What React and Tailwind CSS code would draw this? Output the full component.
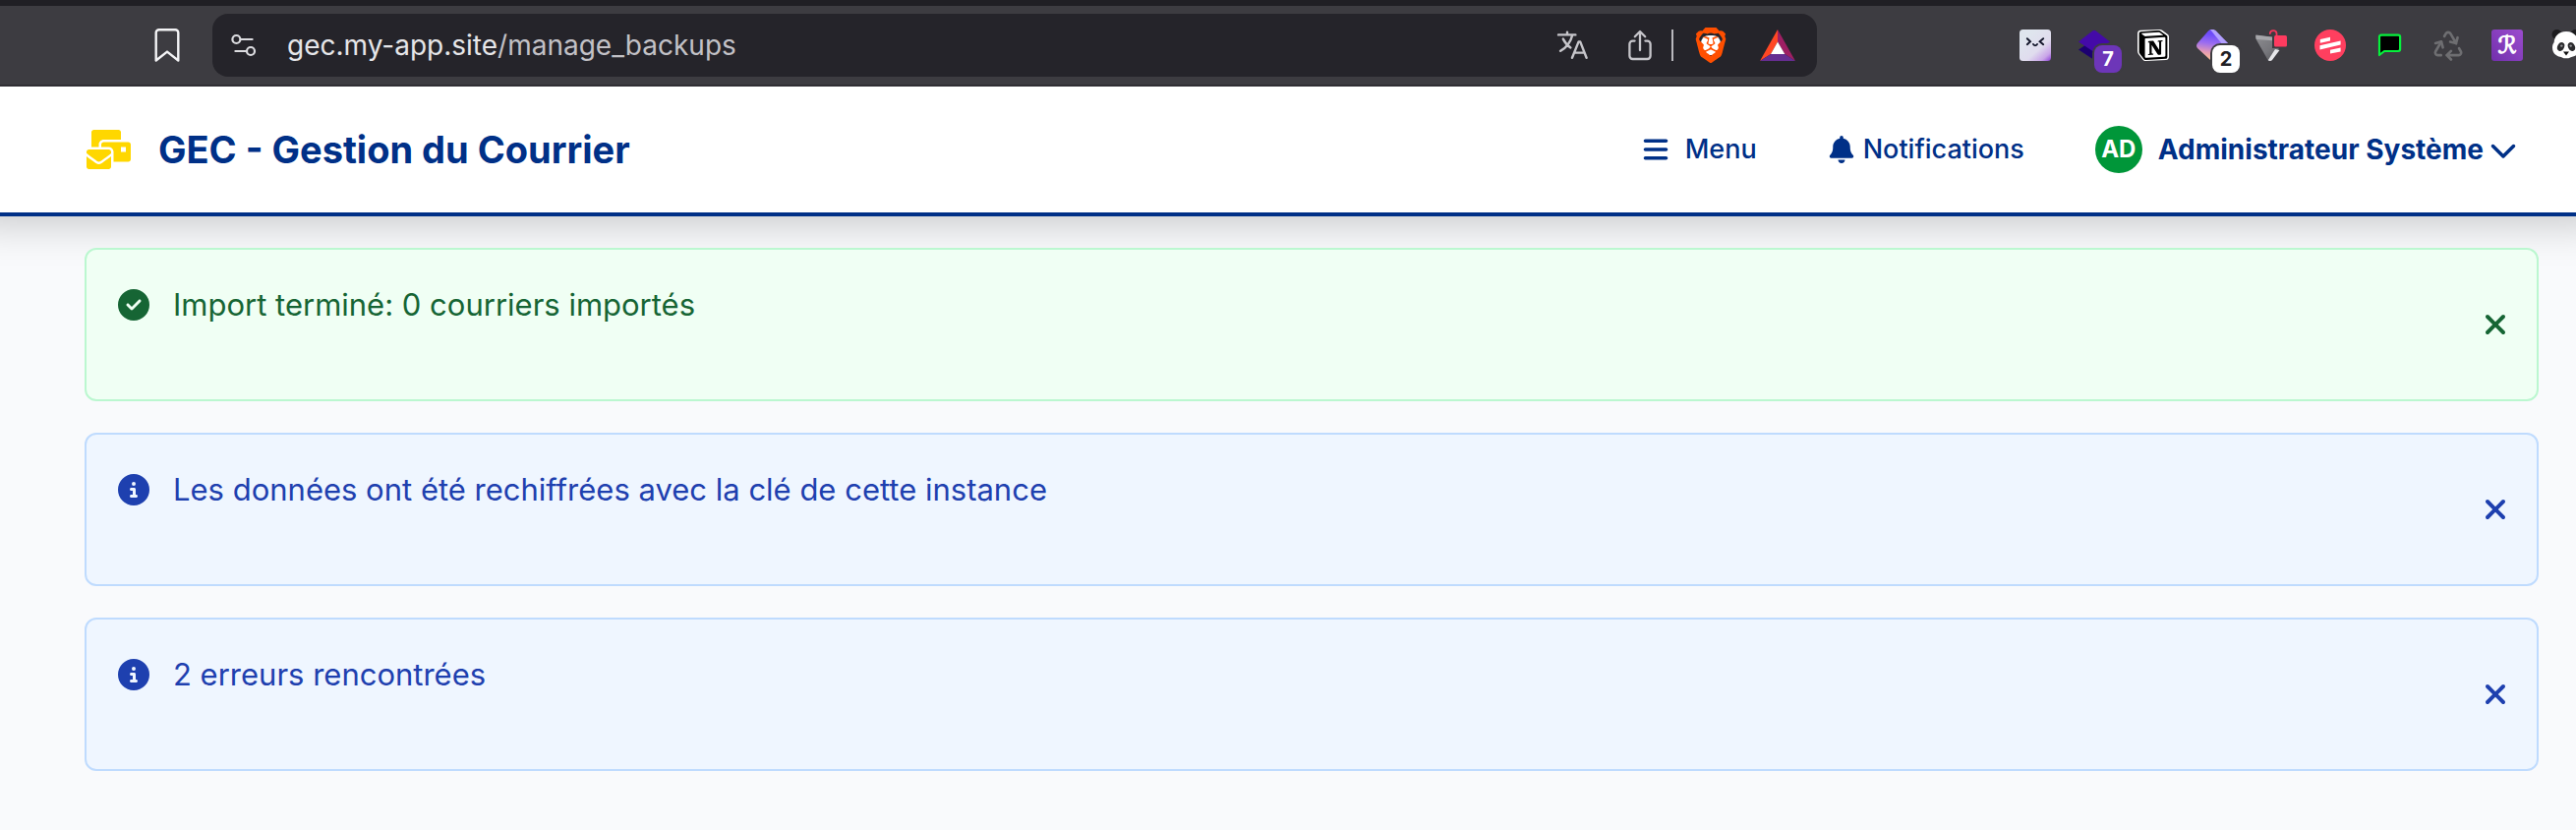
import React from "react";
import { FaMailBulk } from "react-icons/fa";
import { FaBars, FaBell, FaChevronDown, FaCircleCheck, FaCircleInfo, FaXmark } from "react-icons/fa6";
import { SiBrave, SiNotion } from "react-icons/si";

function BookmarkIcon() {
  return (
    <svg viewBox="0 0 28 36" className="h-9 w-7" fill="none" stroke="#f4f4f6" strokeWidth="2.4" strokeLinejoin="round">
      <path d="M2.7 33.5V5.2a3 3 0 0 1 3-3h16.6a3 3 0 0 1 3 3v28.3L14 24.6z" />
    </svg>
  );
}

function TuneIcon() {
  return (
    <svg viewBox="0 0 26 24" className="h-6 w-[26px]" fill="none" stroke="#dcdce0" strokeWidth="2.2" strokeLinecap="round">
      <circle cx="5.4" cy="6" r="4" />
      <path d="M10 6h11.6M4.4 18h11" />
      <circle cx="20" cy="18" r="4" />
    </svg>
  );
}

function TranslateIcon() {
  return (
    <svg viewBox="0 0 32 32" className="h-8 w-8" fill="none" stroke="#c6c5ca" strokeWidth="2.4" strokeLinecap="round" strokeLinejoin="round">
      <path d="M2 5.4h17.4M11 2.6v2.6M4 21.8C9.6 19.4 14.6 13 16.2 5.8M6.8 9.6c2 4 4.2 6.6 7.6 8.8" />
      <path d="M16 28.8 22.6 12.4h1.6L30.6 28.8M18.4 23.6h10" />
    </svg>
  );
}

function ShareIcon() {
  return (
    <svg viewBox="0 0 26 32" className="h-8 w-[26px]" fill="none" stroke="#c6c5ca" strokeWidth="2.3" strokeLinecap="round" strokeLinejoin="round">
      <path d="M7.6 11.6H5.6a3.2 3.2 0 0 0-3.2 3.2v12a3.2 3.2 0 0 0 3.2 3.2h14.8a3.2 3.2 0 0 0 3.2-3.2v-12a3.2 3.2 0 0 0-3.2-3.2h-2" />
      <path d="M13 21V2.2M7.8 7.2 13 2l5.2 5.2" />
    </svg>
  );
}

function BraveLogo() {
  return (
    <span className="relative flex h-9 w-8 items-center justify-center">
      <span className="absolute inset-x-1.5 top-2 h-5 rounded-lg bg-white" />
      <SiBrave className="relative h-9 w-9 shrink-0 text-[#ff4f00]" />
    </span>
  );
}

function BatLogo() {
  return (
    <svg viewBox="0 0 36 32" className="h-8 w-9">
      <path d="M0 32 18 0v12.4L11 25z" fill="#ff4724" />
      <path d="M18 0 36 32 25.3 25 18 12.4z" fill="#9e1f63" />
      <path d="M0 32h36l-10.7-7H11z" fill="#662d91" />
      <path d="m18 12.4 7.3 12.6H11z" fill="#fff" />
    </svg>
  );
}

function FaceExtension() {
  return (
    <svg viewBox="0 0 32 32" className="size-8">
      <defs>
        <linearGradient id="face" x1="0.3" y1="0.2" x2="1" y2="1">
          <stop offset="0" stopColor="#dfe5ee" />
          <stop offset="0.5" stopColor="#e0dcee" />
          <stop offset="0.8" stopColor="#c9a4e8" />
          <stop offset="1" stopColor="#8a3fd6" />
        </linearGradient>
      </defs>
      <rect width="32" height="32" rx="3.5" fill="url(#face)" />
      <path d="M7.8 9.2 11 12.2l-3.2 3M24.2 9.2 20.6 12.2l3.6 3M14 15c.6 1.6 3.4 1.6 4 0" fill="none" stroke="#14172b" strokeWidth="1.9" strokeLinecap="round" />
    </svg>
  );
}

function LayersExtension() {
  return (
    <svg viewBox="0 0 32 32" className="size-8">
      <path d="M0 20.5 16 10l16 10.5L16 31z" fill="#1c0070" />
      <path d="M0 12.5 14.5 1.2a2.5 2.5 0 0 1 3 0L32 12.5 16 23z" fill="#440aa8" />
    </svg>
  );
}

function NotionExtension() {
  return (
    <span className="relative flex size-8 items-center justify-center">
      <svg viewBox="0 0 32 32" className="absolute inset-0">
        <path d="M3 .8 22 0c1.5 0 2.4.3 3.5 1.1l5 3.7c1 .8 1.5 1.7 1.5 3v20c0 2-1.2 3-3 3.2L8.5 32c-1.4 0-2.3-.4-3.2-1.5L1 25c-.7-1-1-1.9-1-3V4C0 2.2 1.2.9 3 .8z" fill="#fff" />
        <path d="M2.5 3.5 7 7.5V29l-4.5-5.5z" fill="#000" />
      </svg>
      <SiNotion className="relative size-[30px] text-black" />
    </span>
  );
}

function PrismExtension() {
  return (
    <svg viewBox="0 0 32 32" className="size-8">
      <defs>
        <linearGradient id="prism" x1="0.55" y1="0" x2="0.4" y2="1">
          <stop offset="0.15" stopColor="#6d4bfb" />
          <stop offset="0.45" stopColor="#9a6cf0" />
          <stop offset="0.75" stopColor="#e59bb4" />
          <stop offset="1" stopColor="#ffc48f" />
        </linearGradient>
      </defs>
      <path d="M12 1.5a5 5 0 0 1 7 0L32 14 18 30c-1 1.6-3 2-4.5.6L1 19c-1.3-1.6-1.3-3.5 0-5z" fill="url(#prism)" />
      <path d="M14 0h2.5c1.4 0 2.4.5 3.5 1.5L32 14l-3.5 4z" fill="#b3a0ff" />
    </svg>
  );
}

function FunnelExtension() {
  return (
    <svg viewBox="0 0 32 32" className="size-8">
      <defs>
        <linearGradient id="funnel" x1="0" y1="0" x2="1" y2="1">
          <stop offset="0" stopColor="#8c8c90" />
          <stop offset="0.5" stopColor="#77777c" />
          <stop offset="1" stopColor="#4c4c50" />
        </linearGradient>
      </defs>
      <path d="M.3 6 30 9 16.5 31.3c-1 1-3 .9-3.9-.4L.4 9.5C0 8.6 0 7 .3 6z" fill="url(#funnel)" />
      <path d="M.3 5.5 20 8v3.5L1 10z" fill="#a6a6aa" />
      <path d="m20 20 4.5 1L17 31c-1 1.2-3.2 1.2-4.2.2z" fill="#e7e7ea" />
      <path d="M17 4h15v15H17z" fill="#3d3c41" />
      <path d="M14.8 4C15 .2 21.2 0 21.5 4v2.5" fill="none" stroke="#f6365c" strokeWidth="1.8" strokeLinecap="round" />
      <rect x="19" y="6" width="13" height="11.5" rx="1.5" fill="#ff3b5f" />
    </svg>
  );
}

function StripesExtension() {
  return (
    <svg viewBox="0 0 32 32" className="size-8">
      <circle cx="16" cy="16" r="16" fill="#ff3f5f" />
      <path d="M5.8 10 16 7.8v3.6L5.8 13.8zM5.5 16.2 26.6 11.4v4L5.5 20.4zM16 20.8 26.6 18.4v4L16 24.6z" fill="#fff" />
    </svg>
  );
}

function ChatExtension() {
  return (
    <svg viewBox="0 0 32 32" className="size-8">
      <path d="M6 26V7.5A2 2 0 0 1 8 5.6h17.2a1.9 1.9 0 0 1 1.9 1.9v12.6a1.9 1.9 0 0 1-1.9 1.9H11z" fill="#000" stroke="#06f03c" strokeWidth="2.2" strokeLinejoin="round" />
    </svg>
  );
}

function RecycleExtension() {
  return (
    <svg viewBox="1 1 22 22" className="size-8" fill="none" stroke="#6e6e71" strokeWidth="1.8" strokeLinecap="round" strokeLinejoin="round">
      <path d="M7 19H4.8a1.8 1.8 0 0 1-1.6-.9 1.8 1.8 0 0 1 0-1.8L7.2 9.5" />
      <path d="M11 19h8.2a1.8 1.8 0 0 0 1.6-.9 1.8 1.8 0 0 0 0-1.8l-1.2-2.1M14 16l-3 3 3 3" />
      <path d="M8.3 13.6 7.2 9.5l-4.1 1.1M9.3 5.8l1.1-1.9A1.8 1.8 0 0 1 12 3a1.8 1.8 0 0 1 1.6.9l4 6.9M13.4 9.6l4.1 1.1 1.1-4.1" />
    </svg>
  );
}

function ScriptExtension() {
  return (
    <span className="flex size-8 items-center justify-center rounded-[3px] bg-linear-to-tr from-[#7230ac] to-[#9c4ccf] font-['DejaVu_Sans',sans-serif] text-[24px] leading-none text-white [-webkit-text-stroke:1px_white]">
      ℛ
    </span>
  );
}

function PandaExtension() {
  return (
    <svg viewBox="0 0 32 32" className="size-8">
      <circle cx="6.5" cy="5" r="5" fill="#1c1c1e" />
      <circle cx="25.5" cy="5" r="5" fill="#1c1c1e" />
      <path d="M16 2C8 2 4 7.5 3.7 13 1.5 16 1.6 20 3 23c2.5 4.2 6 4.6 9 5.4 2 1.2 6 1.2 8 0 3-.8 6.5-1.2 9-5.4 1.4-3 1.5-7-.7-10C28 7.5 24 2 16 2z" fill="#fff" />
      <ellipse cx="10.6" cy="17.5" rx="3.4" ry="4.6" transform="rotate(25 10.6 17.5)" fill="#2b2b2d" />
      <ellipse cx="21.4" cy="17.5" rx="3.4" ry="4.6" transform="rotate(-25 21.4 17.5)" fill="#2b2b2d" />
      <circle cx="11.3" cy="16.6" r="1.2" fill="#98989c" />
      <circle cx="20.7" cy="16.6" r="1.2" fill="#98989c" />
      <path d="M13 22.5h6L16 26.5z" fill="#111" />
    </svg>
  );
}

const extensions = [
  { name: "Visage", Icon: FaceExtension },
  { name: "Calques", Icon: LayersExtension, badge: "7", badgeClass: "bg-[#6d36b8] text-white" },
  { name: "Notion", Icon: NotionExtension },
  { name: "Prisme", Icon: PrismExtension, badge: "2", badgeClass: "bg-white text-[#202024]" },
  { name: "Filtre", Icon: FunnelExtension },
  { name: "Bandes", Icon: StripesExtension },
  { name: "Discussion", Icon: ChatExtension },
  { name: "Recyclage", Icon: RecycleExtension },
  { name: "Script", Icon: ScriptExtension },
  { name: "Panda", Icon: PandaExtension },
];

function BrowserBar() {
  return (
    <div className="relative z-10 flex h-22 items-center overflow-hidden border-t-6 border-b-2 border-t-[#201f24] border-b-[#302f34] bg-[#3d3c41] pl-39">
      <button type="button" aria-label="Ajouter aux favoris" className="mr-8 shrink-0">
        <BookmarkIcon />
      </button>
      <div className="flex h-16 min-w-0 flex-1 items-center rounded-2xl bg-[#25242a] pr-[22px] pl-[19px]">
        <button type="button" aria-label="Informations du site" className="shrink-0">
          <TuneIcon />
        </button>
        <p className="ml-[31px] flex-1 truncate text-[28px] leading-9 text-[#e6e6e9]">
          gec.my-app.site<span className="text-[#c2c1c6]">/manage_backups</span>
        </p>
        <div className="flex shrink-0 items-center">
          <button type="button" aria-label="Traduire"><TranslateIcon /></button>
          <button type="button" aria-label="Partager" className="ml-10"><ShareIcon /></button>
          <span className="ml-[19px] h-8 w-0.5 bg-[#b9b8bd]" />
          <button type="button" aria-label="Brave Shields" className="ml-[22px]"><BraveLogo /></button>
          <button type="button" aria-label="Brave Rewards" className="ml-[34px]"><BatLogo /></button>
        </div>
      </div>
      <div className="ml-[206px] flex w-[566px] shrink-0 gap-7">
        {extensions.map(({ name, Icon, badge, badgeClass }) => (
          <button key={name} type="button" aria-label={name} className="relative size-8 shrink-0">
            <Icon />
            {badge && (
              <span className={`absolute top-4 left-4 flex size-7 items-center justify-center rounded-lg text-[20px] leading-none font-bold ring-2 ring-[#3d3c41] ${badgeClass}`}>
                {badge}
              </span>
            )}
          </button>
        ))}
      </div>
    </div>
  );
}

function SiteHeader() {
  return (
    <header className="flex h-33 items-center justify-between border-b-4 border-[#003087] bg-white pr-[60px] pl-22 text-[#003087] shadow-[0_-24px_40px_32px_rgba(0,0,0,0.2)]">
      <a href="#accueil" className="flex items-center gap-7">
        <FaMailBulk className="h-10 w-[45px] text-[#ffd700]" />
        <h1 className="text-[38px] leading-12 font-bold">GEC - Gestion du Courrier</h1>
      </a>
      <nav className="flex items-center gap-[72px] text-[27px] leading-10">
        <button type="button" className="flex items-center gap-4 font-medium">
          <FaBars className="size-7" />
          Menu
        </button>
        <a href="#notifications" className="flex items-center gap-2 font-medium">
          <FaBell className="size-7" />
          Notifications
        </a>
        <button type="button" className="flex items-center text-[28px] font-bold">
          <span className="mr-4 flex size-12 items-center justify-center rounded-full bg-[#009639] text-[24px] leading-none font-bold text-white">AD</span>
          Administrateur Système
          <FaChevronDown className="ml-1.5 size-7" />
        </button>
      </nav>
    </header>
  );
}

const tones = {
  success: { Icon: FaCircleCheck, box: "border-[#bbf7d0] bg-[#f0fff4] text-[#166534]" },
  info: { Icon: FaCircleInfo, box: "border-[#bfdbfe] bg-[#eff6ff] text-[#1e40af]" },
};

const messages = [
  { tone: "success", text: "Import terminé: 0 courriers importés" },
  { tone: "info", text: "Les données ont été rechiffrées avec la clé de cette instance" },
  { tone: "info", text: "2 erreurs rencontrées" },
];

function Alert({ tone, text }) {
  const { Icon, box } = tones[tone];
  return (
    <div role="alert" className={`flex items-center justify-between rounded-xl border-2 py-8 pr-[26px] pl-8 ${box}`}>
      <div className="flex items-center gap-6 pb-10">
        <Icon className="size-8 shrink-0" />
        <p className="text-[31px] leading-12">{text}</p>
      </div>
      <button type="button" aria-label="Fermer">
        <FaXmark className="size-8" />
      </button>
    </div>
  );
}

export default function App() {
  return (
    <div className="min-h-screen overflow-x-clip bg-[#f9fafc] font-['Inter','Liberation_Sans',sans-serif]">
      <BrowserBar />
      <SiteHeader />
      <main className="flex flex-col gap-8 pt-8 pr-[38px] pb-15 pl-[86px]">
        {messages.map((message) => (
          <Alert key={message.text} {...message} />
        ))}
      </main>
    </div>
  );
}
